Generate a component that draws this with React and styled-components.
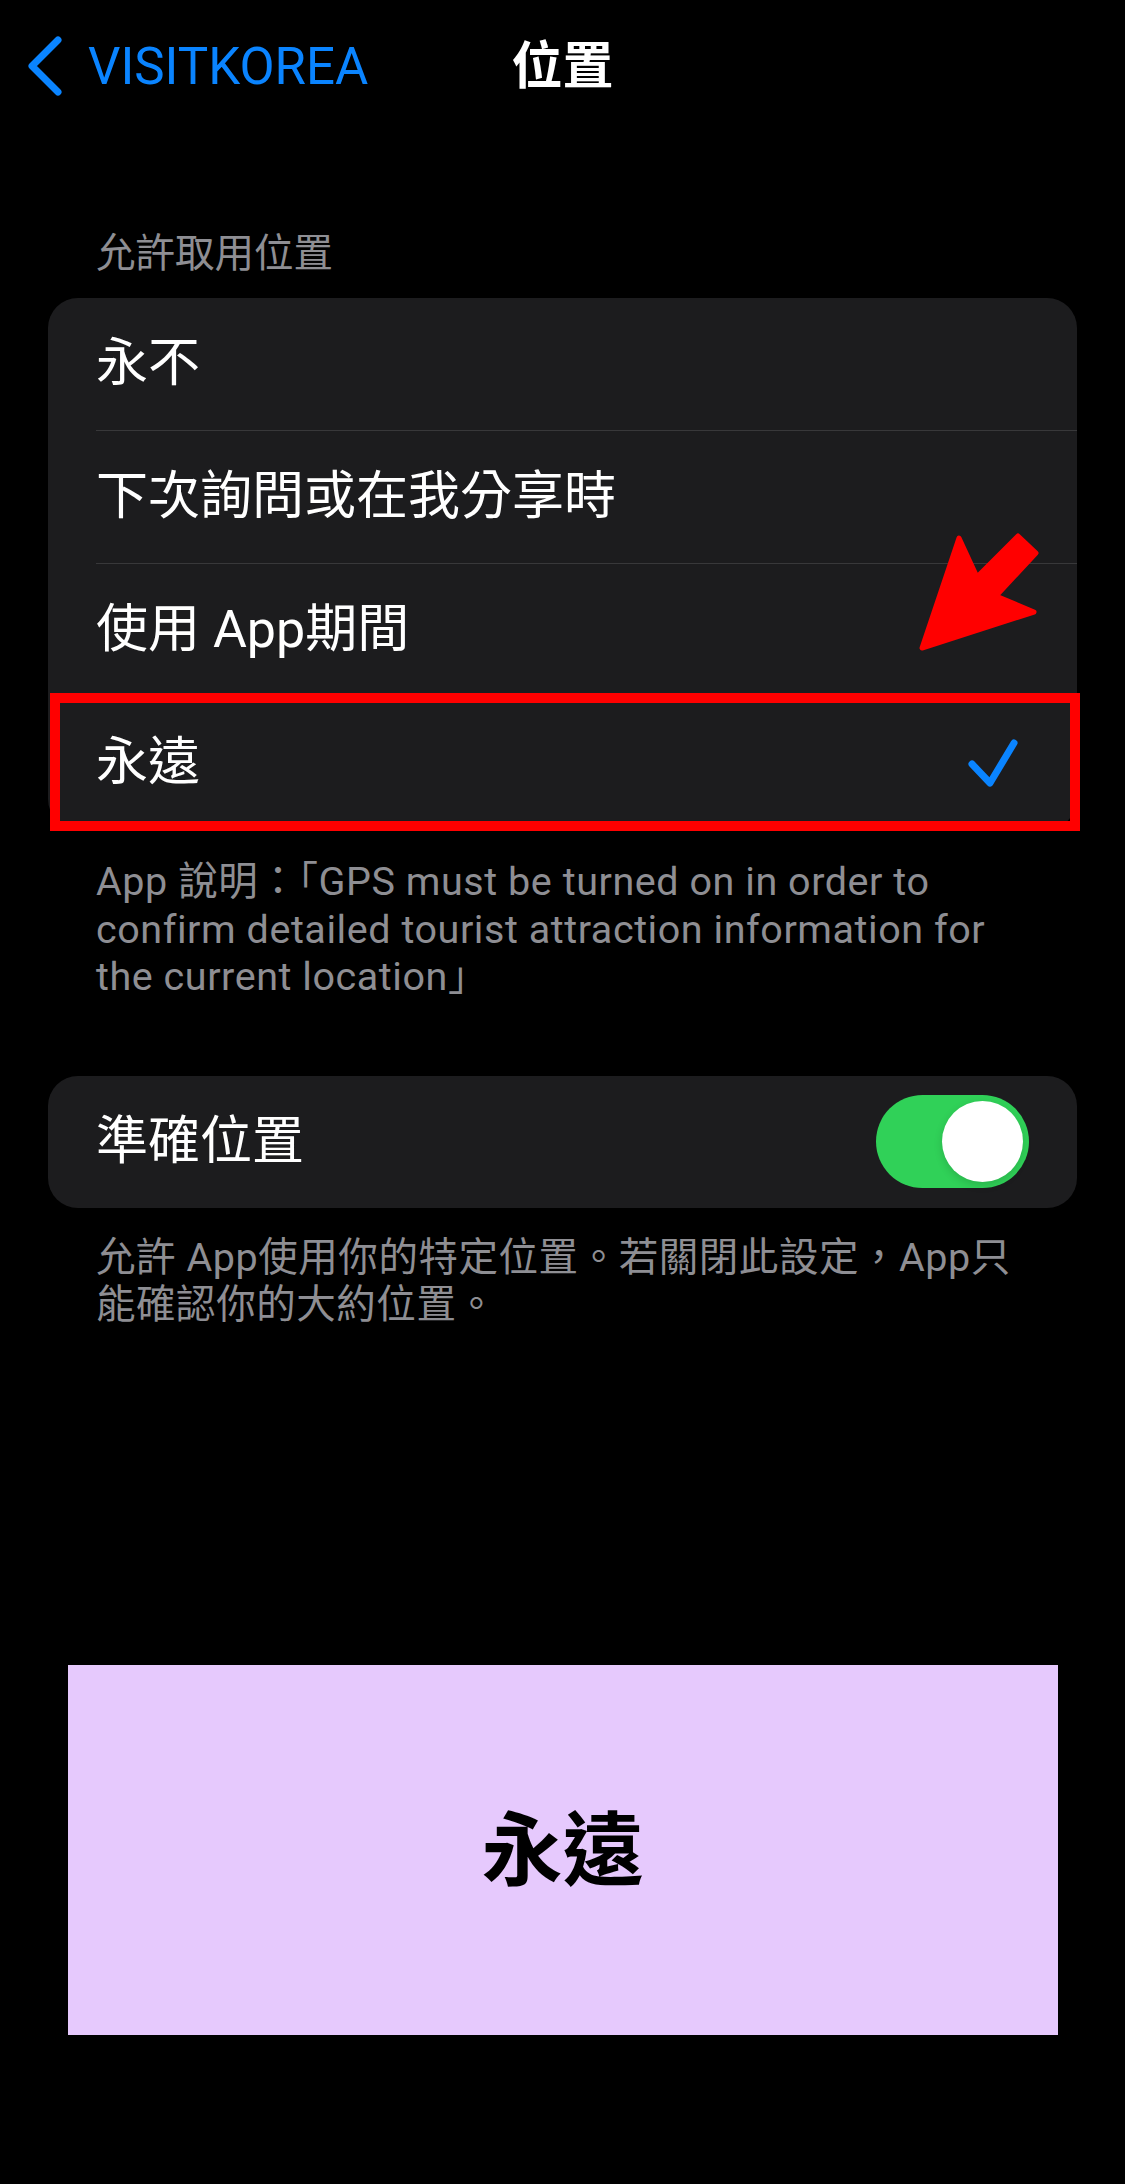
import styled, { createGlobalStyle } from "styled-components";

const GlobalStyle = createGlobalStyle`
  html, body {
    margin: 0;
    padding: 0;
    background: #000;
  }
  body {
    font-family: Roboto, "Noto Sans CJK TC", sans-serif;
    -webkit-font-smoothing: antialiased;
  }
`;

const Page = styled.div`
  width: 1125px;
  min-height: 2184px;
  background: #000;
  color: #fff;
  overflow: hidden;
`;

const NavBar = styled.header`
  height: 132px;
  display: grid;
  grid-template-columns: 1fr auto 1fr;
  align-items: center;
`;

const BackButton = styled.button`
  justify-self: start;
  display: flex;
  align-items: center;
  gap: 26px;
  padding: 0 0 0 26px;
  border: 0;
  background: none;
  color: #0a84ff;
  font-family: Roboto, "Noto Sans CJK TC", sans-serif;
  font-size: 51px;
  line-height: 1;
  cursor: pointer;
`;

const Title = styled.h1`
  margin: 0;
  font-size: 51px;
  font-weight: 700;
  line-height: 1;
`;

const Group = styled.section`
  padding: 0 48px;
  margin-top: ${(p) => p.$top}px;
`;

const GroupHeader = styled.div`
  margin: 0 0 21px;
  padding-left: 48px;
  font-size: 39.5px;
  line-height: 47px;
  color: #8e8e93;
`;

const Card = styled.div`
  position: relative;
  background: #1c1c1e;
  border-radius: 30px;
`;

const Row = styled.div`
  padding-left: 48px;
`;

const RowInner = styled.div`
  display: flex;
  align-items: center;
  height: 132px;
  padding-right: ${(p) => (p.$toggle ? 48 : 57)}px;
  border-bottom: ${(p) => (p.$last ? "none" : "1px solid #38383a")};
  font-size: 52px;
  line-height: 1;
`;

const Label = styled.span`
  flex: 1;
`;

const Highlight = styled.div`
  position: absolute;
  left: 2px;
  top: 395px;
  width: 1030px;
  height: 138px;
  box-sizing: border-box;
  border: 10px solid #ff0000;
  pointer-events: none;
`;

const Arrow = styled.svg`
  position: absolute;
  left: 867px;
  top: 232px;
  width: 125px;
  height: 125px;
  overflow: visible;
`;

const Footer = styled.p`
  margin: 0;
  padding: ${(p) => p.$top}px 48px 0;
  font-size: 39.5px;
  line-height: 47.5px;
  letter-spacing: 0.55px;
  color: #8e8e93;
  white-space: nowrap;
`;

const Switch = styled.div`
  width: 153px;
  height: 93px;
  border-radius: 47px;
  background: #30d158;
  display: flex;
  align-items: center;
  justify-content: flex-end;
  padding: 0 6px;
  box-sizing: border-box;
`;

const Knob = styled.div`
  width: 81px;
  height: 81px;
  border-radius: 50%;
  background: #fff;
  box-shadow: 0 3px 8px rgba(0, 0, 0, 0.15);
`;

const Banner = styled.div`
  width: 990px;
  height: 370px;
  margin: ${(p) => p.$top}px auto 0;
  padding-bottom: 12px;
  box-sizing: border-box;
  background: #e6c9fd;
  color: #000;
  display: flex;
  align-items: center;
  justify-content: center;
  font-size: 81px;
  font-weight: 700;
`;

const Chevron = () => (
  <svg width="36" height="60" viewBox="0 0 36 60">
    <polyline
      points="32,4 6,30 32,56"
      fill="none"
      stroke="#0a84ff"
      strokeWidth="7"
      strokeLinecap="round"
      strokeLinejoin="round"
    />
  </svg>
);

const Check = () => (
  <svg width="52" height="48" viewBox="0 0 52 48">
    <polyline
      points="4,25 22,44 46,4"
      fill="none"
      stroke="#0a84ff"
      strokeWidth="7"
      strokeLinecap="round"
      strokeLinejoin="round"
    />
  </svg>
);

const options = ["永不", "下次詢問或在我分享時", "使用 App期間", "永遠"];
const selected = 3;

const App = () => {
  return (
    <Page>
      <GlobalStyle />
      <NavBar>
        <BackButton>
          <Chevron />
          VISITKOREA
        </BackButton>
        <Title>位置</Title>
        <div />
      </NavBar>

      <Group $top={98}>
        <GroupHeader>允許取用位置</GroupHeader>
        <Card>
          {options.map((opt, i) => (
            <Row key={opt}>
              <RowInner $last={i === options.length - 1}>
                <Label>{opt}</Label>
                {i === selected && <Check />}
              </RowInner>
            </Row>
          ))}
          <Arrow viewBox="915 530 125 125">
            <polygon
              points="922,648 959,538 977,577 1018,536 1036,553 996,596 1034,612"
              fill="#ff0000"
              stroke="#ff0000"
              strokeWidth="5"
              strokeLinejoin="round"
            />
          </Arrow>
          <Highlight />
        </Card>
        <Footer $top={29}>
          App 說明：「GPS must be turned on in order to
          <br />
          confirm detailed tourist attraction information for
          <br />
          the current location」
        </Footer>
      </Group>

      <Group $top={75}>
        <Card>
          <Row>
            <RowInner $last $toggle>
              <Label>準確位置</Label>
              <Switch>
                <Knob />
              </Switch>
            </RowInner>
          </Row>
        </Card>
        <Footer $top={26}>
          允許 App使用你的特定位置。若關閉此設定，App只
          <br />
          能確認你的大約位置。
        </Footer>
      </Group>

      <Banner $top={336}>永遠</Banner>
    </Page>
  );
};

export default App;
